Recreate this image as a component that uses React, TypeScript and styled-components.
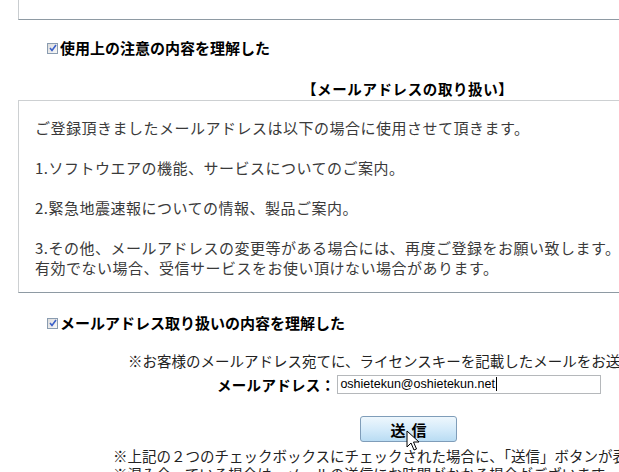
import styled, { createGlobalStyle } from 'styled-components'

const GlobalStyle = createGlobalStyle`
  html, body {
    margin: 0;
    padding: 0;
    background: #fff;
    overflow: hidden;
  }
  body {
    font-family: "Noto Sans CJK JP", "Noto Sans", sans-serif;
    color: #000;
  }
`

const Page = styled.div`
  width: 619px;
  height: 472px;
  overflow: hidden;
  padding-left: 18px;
  box-sizing: border-box;
`

const TopBox = styled.div`
  width: 720px;
  height: 19px;
  border-left: 1px solid #c9cdd0;
  border-bottom: 1px solid #8e9aa3;
`

const AgreeRow = styled.label<{ $top: number }>`
  display: flex;
  align-items: center;
  height: 20px;
  margin-top: ${p => p.$top}px;
  padding-left: 29px;
  font-size: 15px;
  font-weight: bold;
  line-height: 20px;
  white-space: nowrap;
`

const CheckBox = styled.span`
  width: 9px;
  height: 9px;
  border: 1px solid #8a9cb0;
  background: linear-gradient(135deg, #dcdcdc, #f8f8f8);
  display: flex;
  align-items: center;
  justify-content: center;
  margin-right: 2px;
  flex-shrink: 0;
`

const Heading = styled.div`
  margin-top: 21px;
  padding-left: 284px;
  height: 20px;
  line-height: 20px;
  font-size: 14.5px;
  font-weight: bold;
  letter-spacing: 0.6px;
  white-space: nowrap;
`

const InfoBox = styled.div`
  margin-top: 1px;
  width: 720px;
  box-sizing: border-box;
  height: 193px;
  border-top: 1px solid #cdd0d2;
  border-left: 1px solid #cdd0d2;
  border-bottom: 1px solid #8e9aa3;
  padding: 17px 0 0 16px;
  font-size: 15px;
  line-height: 20px;
  letter-spacing: 0.5px;
  color: #3a3a3a;
  white-space: nowrap;
`

const Para = styled.p`
  margin: 0 0 20px;
  &:last-child {
    margin-bottom: 0;
  }
`

const Notice = styled.div<{ $left: number; $top: number }>`
  margin-top: ${p => p.$top}px;
  padding-left: ${p => p.$left}px;
  font-size: 14.5px;
  line-height: 20px;
  color: #222;
  white-space: nowrap;
`

const AddressRow = styled.div`
  display: flex;
  align-items: center;
  margin-top: 3px;
  padding-left: 199px;
  height: 20px;
`

const AddressLabel = styled.span`
  font-size: 14.5px;
  font-weight: bold;
  letter-spacing: 0.3px;
  white-space: nowrap;
  margin-right: 2px;
`

const AddressInput = styled.div`
  width: 260px;
  height: 17px;
  border: 1px solid #b5b8bb;
  display: flex;
  align-items: center;
  padding-left: 2px;
  font-family: "Liberation Sans", Arial, sans-serif;
  font-size: 12.5px;
  color: #000;
`

const Caret = styled.span`
  width: 1px;
  height: 14px;
  background: #000;
  margin-left: 1px;
`

const ButtonRow = styled.div`
  position: relative;
  margin-top: 22px;
  padding-left: 342px;
  height: 26px;
`

const SendButton = styled.button`
  width: 97px;
  height: 26px;
  border: 1px solid #7f9db9;
  border-radius: 3px;
  background: linear-gradient(#eef7fd, #d5ebfa 50%, #b9dcf3);
  font-family: "Noto Sans CJK JP", sans-serif;
  font-size: 15px;
  font-weight: bold;
  color: #000;
  padding: 0;
  letter-spacing: 6px;
  text-indent: 6px;
`

const Cursor = styled.svg`
  position: absolute;
  left: 388px;
  top: 14px;
`

const Footnote = styled.div`
  margin-top: 5px;
  padding-left: 95px;
  font-size: 14.5px;
  line-height: 18px;
  color: #222;
  white-space: nowrap;
`

function Check() {
  return (
    <CheckBox>
      <svg width="8" height="8" viewBox="0 0 8 8">
        <path d="M1 4 L3 6.5 L7 1" fill="none" stroke="#3a5fc8" strokeWidth="1.6" />
      </svg>
    </CheckBox>
  )
}

export default function App() {
  return (
    <>
      <GlobalStyle />
      <Page>
        <TopBox />
        <AgreeRow $top={18}>
          <Check />
          使用上の注意の内容を理解した
        </AgreeRow>
        <Heading>【メールアドレスの取り扱い】</Heading>
        <InfoBox>
          <Para>ご登録頂きましたメールアドレスは以下の場合に使用させて頂きます。</Para>
          <Para>1.ソフトウエアの機能、サービスについてのご案内。</Para>
          <Para>2.緊急地震速報についての情報、製品ご案内。</Para>
          <Para>
            3.その他、メールアドレスの変更等がある場合には、再度ご登録をお願い致します。
            <br />
            有効でない場合、受信サービスをお使い頂けない場合があります。
          </Para>
        </InfoBox>
        <AgreeRow $top={20}>
          <Check />
          メールアドレス取り扱いの内容を理解した
        </AgreeRow>
        <Notice $left={110} $top={18}>
          ※お客様のメールアドレス宛てに、ライセンスキーを記載したメールをお送り致します。
        </Notice>
        <AddressRow>
          <AddressLabel>メールアドレス：</AddressLabel>
          <AddressInput>
            oshietekun@oshietekun.net
            <Caret />
          </AddressInput>
        </AddressRow>
        <ButtonRow>
          <SendButton>送信</SendButton>
          <Cursor width="14" height="22" viewBox="0 0 14 22">
            <path
              d="M1 1 L1 17 L5 13 L8 20 L10.5 19 L7.5 12 L13 12 Z"
              fill="#fff"
              stroke="#000"
              strokeWidth="1"
              strokeLinejoin="round"
            />
          </Cursor>
        </ButtonRow>
        <Footnote>
          ※上記の２つのチェックボックスにチェックされた場合に、「送信」ボタンが表示されます。
          <br />
          ※混み合っている場合は、メールの送信にお時間がかかる場合がございます。
        </Footnote>
      </Page>
    </>
  )
}
